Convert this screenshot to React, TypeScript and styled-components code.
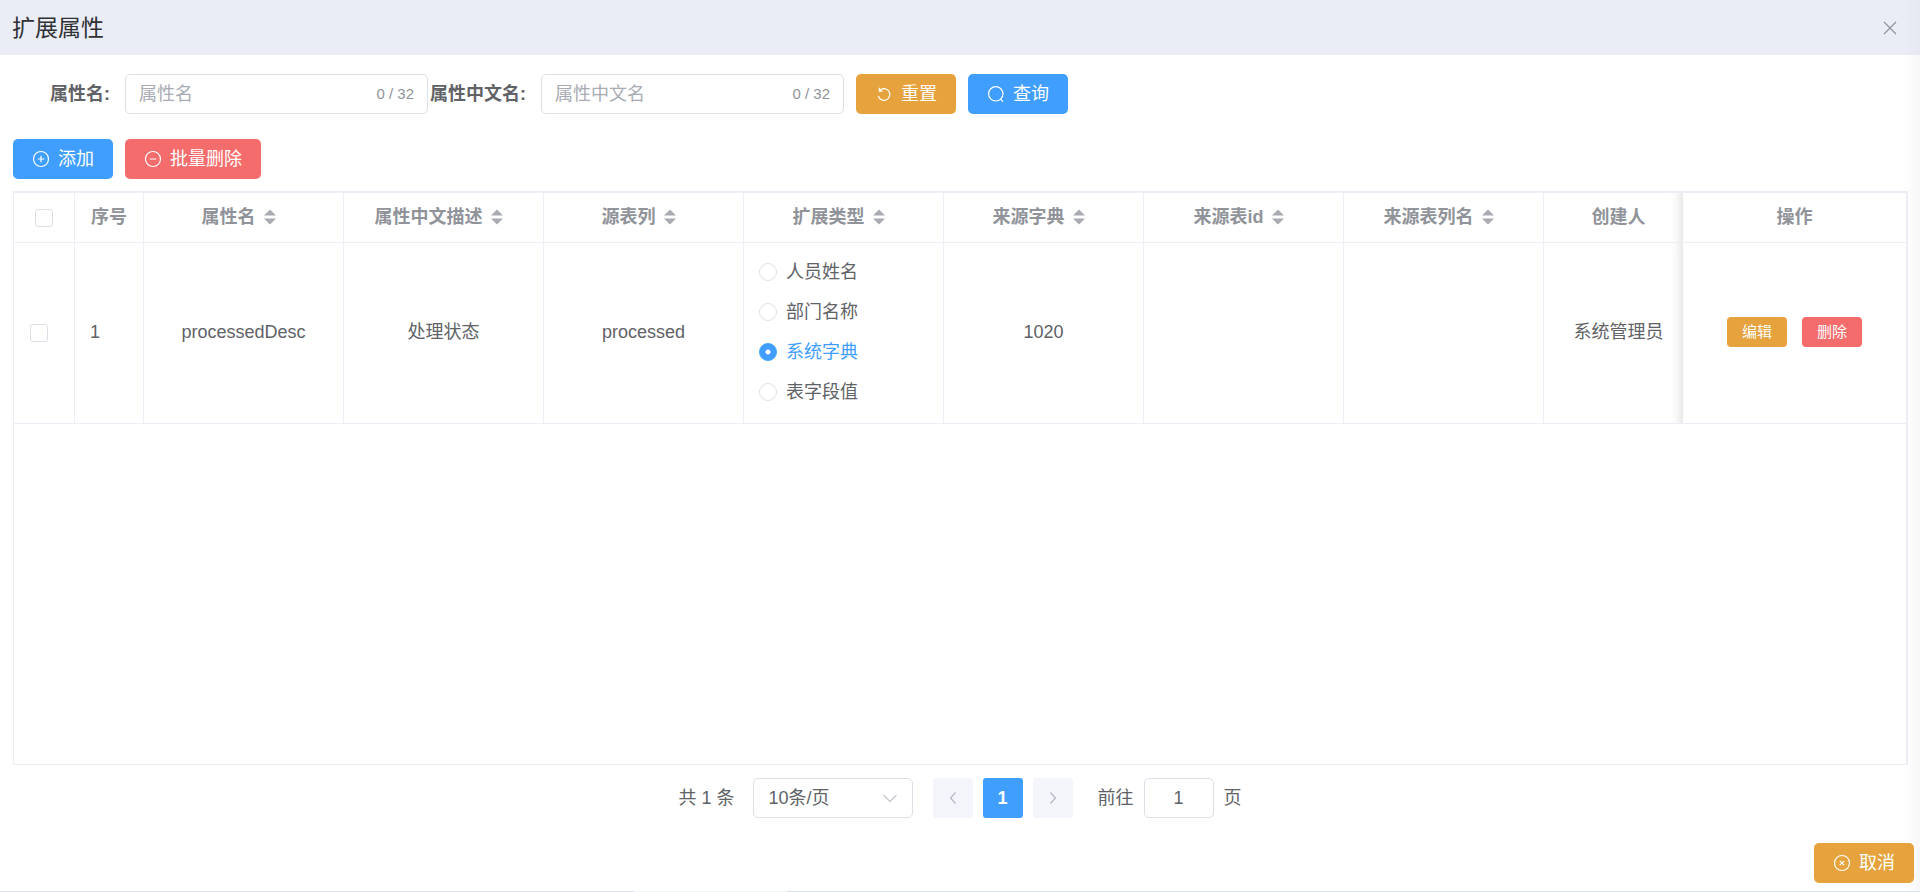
import React, { useState } from 'react';
import styled, { createGlobalStyle, css } from 'styled-components';

const color = {
  primary: '#409eff',
  warning: '#e6a23c',
  danger: '#f56c6c',
  text: '#606266',
  heading: '#303133',
  muted: '#909399',
  placeholder: '#a8abb2',
  border: '#dcdfe6',
  line: '#ebeef5',
};

const GlobalStyle = createGlobalStyle`
  *, *::before, *::after { box-sizing: border-box; }
  body { margin: 0; background: #fff; line-height: 24px; }
  body, button, input, select {
    font-family: "Liberation Sans", "Noto Sans CJK SC", sans-serif;
    font-size: 18px;
    color: ${color.text};
  }
`;

const Drawer = styled.main`
  display: flex;
  flex-direction: column;
  min-height: 100vh;
  background: linear-gradient(to left, rgba(0, 0, 0, 0.03), transparent 16px) #fff;
`;

const Header = styled.header`
  display: flex;
  align-items: center;
  justify-content: space-between;
  height: 55px;
  padding: 0 17px 0 12px;
  background: linear-gradient(to left, rgba(0, 0, 0, 0.02), transparent 16px) #eaedf6;
`;

const Title = styled.h1`
  margin: 0;
  font-size: 23px;
  line-height: 30px;
  font-weight: 400;
  color: ${color.heading};
`;

const CloseButton = styled.button`
  display: flex;
  padding: 4px;
  border: 0;
  background: none;
  color: ${color.muted};
  cursor: pointer;
`;

const SearchForm = styled.form`
  display: flex;
  align-items: center;
  padding: 19px 12px 0;
`;

const FieldLabel = styled.label`
  width: 113px;
  padding-right: 15px;
  text-align: right;
  white-space: nowrap;
  font-weight: 700;
`;

const Field = styled.div`
  display: flex;
  align-items: center;
  width: 303px;
  height: 40px;
  padding: 0 13px;
  border: 1px solid ${color.border};
  border-radius: 5px;
  background: #fff;
`;

const FieldInput = styled.input`
  flex: 1;
  min-width: 0;
  height: 36px;
  padding: 0;
  border: 0;
  outline: 0;
  background: none;
  &::placeholder { color: ${color.placeholder}; opacity: 1; }
`;

const Counter = styled.span`
  font-size: 15px;
  color: ${color.muted};
`;

const ButtonGroup = styled.div`
  display: flex;
  gap: 12px;
`;

const SearchActions = styled(ButtonGroup)`
  margin-left: 12px;
`;

const Toolbar = styled(ButtonGroup)`
  padding: 25px 13px 12px;
`;

type Tone = 'primary' | 'warning' | 'danger';

const Button = styled.button<{ $tone: Tone; $small?: boolean }>`
  display: inline-flex;
  align-items: center;
  justify-content: center;
  gap: 8px;
  height: 40px;
  padding: 0 19px;
  border: 0;
  border-radius: 5px;
  background: ${(p) => color[p.$tone]};
  color: #fff;
  line-height: 24px;
  white-space: nowrap;
  cursor: pointer;
  ${(p) =>
    p.$small &&
    css`
      height: 30px;
      padding: 0 15px;
      border-radius: 4px;
      font-size: 15px;
    `}
`;

const TableFrame = styled.section`
  flex: 1;
  margin: 0 12px 0 13px;
  border: solid ${color.line};
  border-width: 2px 2px 1px 1px;
  background: #fff;
`;

const Table = styled.table`
  width: 100%;
  table-layout: fixed;
  border-collapse: separate;
  border-spacing: 0;
`;

const cell = css<{ $edge?: 'under' | 'fixed'; $align?: 'left' }>`
  border: solid ${color.line};
  border-width: 0 1px 1px 0;
  text-align: ${(p) => p.$align ?? 'center'};
  ${(p) =>
    p.$edge === 'under' &&
    css`
      padding-left: 10px;
      padding-right: 0;
      border-right: 0;
      background: linear-gradient(to left, rgba(0, 0, 0, 0.09), rgba(0, 0, 0, 0.03) 6px, transparent 12px);
    `}
  ${(p) => p.$edge === 'fixed' && 'border-right: 0;'}
`;

const Th = styled.th<{ $edge?: 'under' | 'fixed'; $align?: 'left' }>`
  height: 50px;
  padding: 0 0 2px;
  font-weight: 700;
  color: ${color.muted};
  ${cell}
`;

const Td = styled.td<{ $edge?: 'under' | 'fixed'; $align?: 'left' }>`
  padding: 9px 15px 11px;
  ${cell}
`;

const HeadCell = styled.span`
  display: inline-flex;
  align-items: center;
  vertical-align: middle;
`;

const SortButton = styled.button`
  display: inline-flex;
  padding: 0 10px 0 8px;
  border: 0;
  background: none;
  color: ${color.placeholder};
  cursor: pointer;
`;

const Checkbox = styled.input`
  appearance: none;
  display: inline-block;
  width: 18px;
  height: 18px;
  margin: 0 1px;
  border: 1px solid ${color.border};
  border-radius: 3px;
  background: #fff;
  vertical-align: middle;
  &:checked { background: ${color.primary}; border-color: ${color.primary}; }
`;

const RadioList = styled.div`
  display: flex;
  flex-direction: column;
`;

const RadioLabel = styled.label`
  display: flex;
  align-items: center;
  gap: 9px;
  height: 40px;
  cursor: pointer;
  &:has(input:checked) { color: ${color.primary}; }
`;

const Radio = styled.input`
  appearance: none;
  width: 18px;
  height: 18px;
  margin: 0;
  border: 1px solid ${color.border};
  border-radius: 50%;
  background: #fff;
  &:checked {
    border-color: ${color.primary};
    background: radial-gradient(circle, #fff 2px, ${color.primary} 3px);
  }
`;

const RowActions = styled.div`
  display: flex;
  justify-content: center;
  gap: 15px;
`;

const Pagination = styled.nav`
  display: flex;
  align-items: center;
  justify-content: center;
  padding-top: 13px;
`;

const PageSize = styled.div`
  display: grid;
  align-items: center;
  width: 160px;
  margin: 0 20px 0 18px;
  & > * { grid-area: 1 / 1; }
  & > svg { justify-self: end; margin-right: 14px; color: #c0c4cc; pointer-events: none; }
`;

const SizeSelect = styled.select`
  appearance: none;
  width: 100%;
  height: 40px;
  padding: 0 15px;
  border: 1px solid ${color.border};
  border-radius: 5px;
  background: #fff;
`;

const Pager = styled.div`
  display: flex;
  gap: 10px;
`;

const PageButton = styled.button<{ $current?: boolean }>`
  display: flex;
  align-items: center;
  justify-content: center;
  width: 40px;
  height: 40px;
  padding: 0;
  border: 0;
  border-radius: 3px;
  font-weight: 700;
  background: ${(p) => (p.$current ? color.primary : '#f4f5fa')};
  color: ${(p) => (p.$current ? '#fff' : '#b4b8c0')};
`;

const Jumper = styled.label`
  display: flex;
  align-items: center;
  gap: 10px;
  margin-left: 25px;
`;

const JumpInput = styled.input`
  width: 70px;
  height: 40px;
  padding: 0;
  border: 1px solid ${color.border};
  border-radius: 5px;
  text-align: center;
`;

const Footer = styled.footer`
  display: flex;
  justify-content: flex-end;
  padding: 25px 6px 8px;
`;

const BottomEdge = styled.div`
  height: 1px;
  background: linear-gradient(to right, #dce3ec 33%, #eef5f7 33%, #eef5f7 41%, #d8e0e8 41%);
`;

const icons = {
  refresh: 'M4.5 5.6A5.9 5.9 0 1 1 3.3 11M4.3 2.8v3.3h3.3',
  search: 'M13.2 13.8l2.8 2.8M8.8 1.6a7.2 7.2 0 1 0 0 14.4a7.2 7.2 0 0 0 0-14.4',
  plus: 'M9 1.5a7.5 7.5 0 1 0 0 15 7.5 7.5 0 0 0 0-15M9 5.8v6.4M5.8 9h6.4',
  minus: 'M9 1.5a7.5 7.5 0 1 0 0 15 7.5 7.5 0 0 0 0-15M5.8 9h6.4',
  cancel: 'M9 1.5a7.5 7.5 0 1 0 0 15 7.5 7.5 0 0 0 0-15M6.8 6.8l4.4 4.4M11.2 6.8l-4.4 4.4',
  close: 'M3 3l12 12M15 3L3 15',
  left: 'M11.5 3.5L6.5 9l5 5.5',
  right: 'M6.5 3.5l5 5.5-5 5.5',
  down: 'M2.5 6L9 12.5 15.5 6',
};

const Icon = ({ name }: { name: keyof typeof icons }) => (
  <svg width="18" height="18" viewBox="0 0 18 18" fill="none" stroke="currentColor" strokeWidth="1.2" aria-hidden="true">
    <path d={icons[name]} />
  </svg>
);

const SortIcon = () => (
  <svg width="12" height="16" viewBox="0 0 12 16" fill="currentColor" aria-hidden="true">
    <path d="M6 0.5L12 6.5H0zM0 9.5H12L6 15.5z" />
  </svg>
);

const SearchField = ({ id, name }: { id: string; name: string }) => {
  const [value, setValue] = useState('');
  return (
    <>
      <FieldLabel htmlFor={id}>{name}:</FieldLabel>
      <Field>
        <FieldInput
          id={id}
          placeholder={name}
          maxLength={32}
          value={value}
          onChange={(e) => setValue(e.target.value)}
        />
        <Counter>{`${value.length} / 32`}</Counter>
      </Field>
    </>
  );
};

const sortable = ['属性名', '属性中文描述', '源表列', '扩展类型', '来源字典', '来源表id', '来源表列名'];
const widths = [61, 69, 200, 200, 200, 200, 200, 200, 200, 139, 223];
const types = ['人员姓名', '部门名称', '系统字典', '表字段值'];

export default function App() {
  const [type, setType] = useState('系统字典');
  return (
    <Drawer>
      <GlobalStyle />
      <Header>
        <Title>扩展属性</Title>
        <CloseButton aria-label="关闭">
          <Icon name="close" />
        </CloseButton>
      </Header>
      <SearchForm onSubmit={(e) => e.preventDefault()}>
        <SearchField id="attr-name" name="属性名" />
        <SearchField id="attr-label" name="属性中文名" />
        <SearchActions>
          <Button type="reset" $tone="warning"><Icon name="refresh" />重置</Button>
          <Button type="submit" $tone="primary"><Icon name="search" />查询</Button>
        </SearchActions>
      </SearchForm>
      <Toolbar>
        <Button $tone="primary"><Icon name="plus" />添加</Button>
        <Button $tone="danger"><Icon name="minus" />批量删除</Button>
      </Toolbar>
      <TableFrame>
        <Table>
          <colgroup>
            {widths.map((w, i) => <col key={i} width={w} />)}
          </colgroup>
          <thead>
            <tr>
              <Th><Checkbox type="checkbox" aria-label="全选" /></Th>
              <Th>序号</Th>
              {sortable.map((name) => (
                <Th key={name}>
                  <HeadCell>
                    {name}
                    <SortButton aria-label={`排序 ${name}`}><SortIcon /></SortButton>
                  </HeadCell>
                </Th>
              ))}
              <Th $edge="under">创建人</Th>
              <Th $edge="fixed">操作</Th>
            </tr>
          </thead>
          <tbody>
            <tr>
              <Td $align="left"><Checkbox type="checkbox" aria-label="选择第 1 行" /></Td>
              <Td $align="left">1</Td>
              <Td>processedDesc</Td>
              <Td>处理状态</Td>
              <Td>processed</Td>
              <Td $align="left">
                <RadioList>
                  {types.map((name) => (
                    <RadioLabel key={name}>
                      <Radio type="radio" name="type" checked={type === name} onChange={() => setType(name)} />
                      {name}
                    </RadioLabel>
                  ))}
                </RadioList>
              </Td>
              <Td>1020</Td>
              <Td />
              <Td />
              <Td $edge="under">系统管理员</Td>
              <Td $edge="fixed">
                <RowActions>
                  <Button $tone="warning" $small>编辑</Button>
                  <Button $tone="danger" $small>删除</Button>
                </RowActions>
              </Td>
            </tr>
          </tbody>
        </Table>
      </TableFrame>
      <Pagination aria-label="分页">
        <span>共 1 条</span>
        <PageSize>
          <SizeSelect aria-label="每页条数" defaultValue="10">
            <option value="10">10条/页</option>
            <option value="20">20条/页</option>
          </SizeSelect>
          <Icon name="down" />
        </PageSize>
        <Pager>
          <PageButton aria-label="上一页" disabled><Icon name="left" /></PageButton>
          <PageButton $current>1</PageButton>
          <PageButton aria-label="下一页" disabled><Icon name="right" /></PageButton>
        </Pager>
        <Jumper>
          前往
          <JumpInput defaultValue="1" />
          页
        </Jumper>
      </Pagination>
      <Footer>
        <Button $tone="warning"><Icon name="cancel" />取消</Button>
      </Footer>
      <BottomEdge />
    </Drawer>
  );
}
